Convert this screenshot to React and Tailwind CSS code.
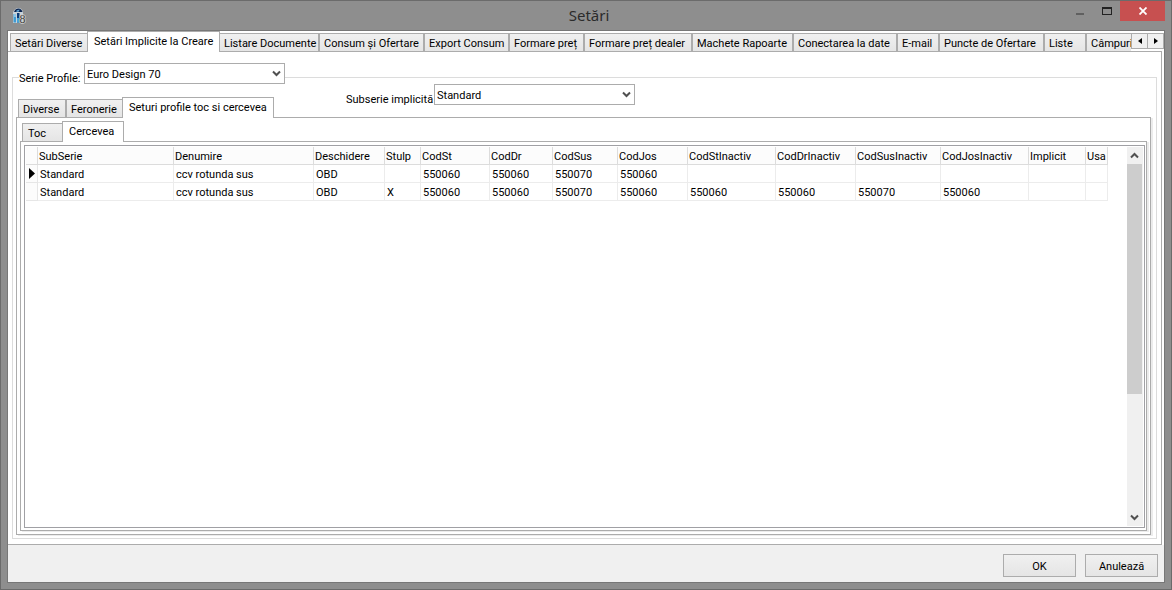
import React, { useState } from "react";

const mainTabs = [
  { label: "Setări Diverse", width: "w-[78px]" },
  { label: "Setări Implicite la Creare", width: "w-[133px]" },
  { label: "Listare Documente", width: "w-[100px]" },
  { label: "Consum și Ofertare", width: "w-[105px]" },
  { label: "Export Consum", width: "w-[85px]" },
  { label: "Formare preț", width: "w-[75px]" },
  { label: "Formare preț dealer", width: "w-[108px]" },
  { label: "Machete Rapoarte", width: "w-[101px]" },
  { label: "Conectarea la date", width: "w-[104px]" },
  { label: "E-mail", width: "w-[42px]" },
  { label: "Puncte de Ofertare", width: "w-[105px]" },
  { label: "Liste", width: "w-[42px]" },
  { label: "Câmpuri", width: "w-[60px]" },
];

const profileTabs = [
  { label: "Diverse", width: "w-[48px]" },
  { label: "Feronerie", width: "w-[57px]" },
  { label: "Seturi profile toc si cercevea", width: "w-[152px]" },
];

const setTabs = [
  { label: "Toc", width: "w-[41px]" },
  { label: "Cercevea", width: "w-[62px]" },
];

const columns = [
  { label: "SubSerie", width: "w-[136px]" },
  { label: "Denumire", width: "w-[140px]" },
  { label: "Deschidere", width: "w-[71px]" },
  { label: "Stulp", width: "w-[36px]" },
  { label: "CodSt", width: "w-[69px]" },
  { label: "CodDr", width: "w-[63px]" },
  { label: "CodSus", width: "w-[65px]" },
  { label: "CodJos", width: "w-[70px]" },
  { label: "CodStInactiv", width: "w-[88px]" },
  { label: "CodDrInactiv", width: "w-[80px]" },
  { label: "CodSusInactiv", width: "w-[85px]" },
  { label: "CodJosInactiv", width: "w-[88px]" },
  { label: "Implicit", width: "w-[57px]" },
  { label: "Usa", width: "w-[22px]" },
];

const rows = [
  ["Standard", "ccv rotunda sus", "OBD", "", "550060", "550060", "550070", "550060", "", "", "", "", "", ""],
  ["Standard", "ccv rotunda sus", "OBD", "X", "550060", "550060", "550070", "550060", "550060", "550060", "550070", "550060", "", ""],
];

function TabStrip({ tabs, initial, roomy }) {
  const [active, setActive] = useState(initial);
  const idlePad = roomy ? "pl-[5px]" : "pl-1";
  return (
    <div role="tablist" className="flex items-end">
      {tabs.map((tab, i) => (
        <button
          key={tab.label}
          type="button"
          role="tab"
          aria-selected={i === active}
          onClick={() => setActive(i)}
          className={
            i === active
              ? `relative z-10 -mx-px -mb-px h-[21px] shrink-0 border border-b-0 border-[#acacac] bg-white pb-px pl-1.5 text-left whitespace-nowrap ${tab.width}`
              : `h-[18px] shrink-0 border border-b-0 border-[#acacac] bg-linear-to-b from-[#f0f0f0] to-[#e5e5e5] pt-0.5 text-left whitespace-nowrap ${idlePad} ${tab.width}`
          }
        >
          {tab.label}
        </button>
      ))}
    </div>
  );
}

function Chevron({ up }) {
  return (
    <svg viewBox="0 0 9 7" className="h-[7px] w-[9px]" fill="none" stroke="#505050" strokeWidth="2">
      <path d={up ? "M1 5.5 4.5 2 8 5.5" : "M1 1.5 4.5 5 8 1.5"} />
    </svg>
  );
}

function Dropdown({ id, options }) {
  return (
    <span className="relative inline-flex">
      <select id={id} className="h-[21px] w-[201px] appearance-none border border-[#acacac] bg-white pt-0.5 pr-5 pl-0.5 outline-none">
        {options.map((o) => (
          <option key={o}>{o}</option>
        ))}
      </select>
      <span className="pointer-events-none absolute top-[7px] right-1">
        <Chevron />
      </span>
    </span>
  );
}

function AppIcon() {
  return (
    <svg viewBox="0 0 16 18" className="h-[18px] w-4">
      <path d="M0 4.500C1 1.500 3 0 5.500 0S9.500 1.500 10 4.500V15H0Z" fill="#c9d3da" />
      <path d="M1 4C2 1.500 3.500 .6 5.500 .6S8.800 1.800 9.500 4Z" fill="#0a2450" />
      <path d="M3.500 2.500 6.500 1.500 6 3.500 3.500 4Z" fill="#5fa9da" />
      <path d="M.5 6H3V14.500H.5Z" fill="#3f9bd3" />
      <path d="M1.500 6H2.500V9H1.500Z" fill="#d8f0fb" />
      <path d="M4 5H6.500V14.500H4Z" fill="#0b3a75" />
      <path d="M4 10H6.500V14.500H4Z" fill="#48a3d9" />
      <text x="6.500" y="14.500" fontSize="12" fontFamily="Liberation Serif, serif" fill="#444" stroke="#cfcfcf" strokeWidth="1.500" paintOrder="stroke">
        8
      </text>
    </svg>
  );
}

function TitleBar() {
  return (
    <header className="flex h-[29px] items-start">
      <div className="flex flex-1 pt-[7px] pl-3">
        <AppIcon />
      </div>
      <h1 className="pt-1 text-[15px] leading-5 text-[#2b2b2b]" style={{ fontFamily: '"Noto Sans", sans-serif' }}>
        Setări
      </h1>
      <div className="flex flex-1 justify-end pr-1.5">
        <button type="button" aria-label="Minimizează" className="flex h-5 w-[27px] items-center justify-center">
          <svg viewBox="0 0 8 20" className="h-5 w-2">
            <path d="M0 12H8V14H0Z" fill="#606060" />
          </svg>
        </button>
        <button type="button" aria-label="Maximizează" className="flex h-5 w-[27px] items-center justify-center">
          <svg viewBox="0 0 10 20" className="h-5 w-2.5">
            <path d="M0 6H10V14H0ZM1 8V13H9V8Z" fill="#222" fillRule="evenodd" />
          </svg>
        </button>
        <button type="button" aria-label="Închide" className="flex h-5 w-[45px] items-center justify-center bg-[#c75050]">
          <svg viewBox="0 0 8 8" className="h-2 w-2" stroke="#fff" strokeWidth="1.800">
            <path d="M.5 .5 7.500 7.500M7.500 .5 .5 7.500" />
          </svg>
        </button>
      </div>
    </header>
  );
}

function Grid() {
  return (
    <div className="flex flex-1 border border-[#a0a0a4] bg-white p-px">
      <div className="min-w-0 flex-1 overflow-hidden">
        <table className="w-[1082px] table-fixed border-separate border-spacing-0 text-left">
          <thead>
            <tr className="h-[18px] bg-[#fcfcfc]">
              <th aria-label="Rând curent" className="w-3 border-r border-b border-[#dcdcdc] p-0" />
              {columns.map((c) => (
                <th key={c.label} className={`h-[18px] border-r border-b border-[#dcdcdc] p-0 pt-0.5 pl-px font-normal whitespace-nowrap ${c.width}`}>
                  {c.label}
                </th>
              ))}
            </tr>
          </thead>
          <tbody>
            {rows.map((row, r) => (
              <tr key={r} className="h-[18px]">
                <td className="h-[18px] border-r border-b border-[#e6e6e6] bg-[#fcfcfc] p-0 pl-[3px]">
                  {r === 0 && (
                    <svg viewBox="0 0 6 11" className="h-[11px] w-1.5">
                      <path d="M0 0 6 5.500 0 11Z" fill="#000" />
                    </svg>
                  )}
                </td>
                {row.map((cell, i) => (
                  <td key={i} className="h-[18px] border-r border-b border-[#ececec] p-0 pt-0.5 pl-0.5 whitespace-nowrap">
                    {cell}
                  </td>
                ))}
              </tr>
            ))}
          </tbody>
        </table>
      </div>
      <div className="flex w-4 flex-col bg-[#f0f0f0]">
        <button type="button" aria-label="Sus" className="flex h-[17px] items-center justify-center pr-px">
          <Chevron up />
        </button>
        <div className="min-h-0 flex-1">
          <div className="mr-px h-[230px] bg-[#cdcdcd]" />
        </div>
        <button type="button" aria-label="Jos" className="flex h-[17px] items-center justify-center pr-px">
          <Chevron />
        </button>
      </div>
    </div>
  );
}

function ScrollTabButton({ label, path }) {
  return (
    <button type="button" aria-label={label} className="-ml-px flex h-4 w-[17px] items-center justify-center border border-[#acacac] bg-[#f0f0f0] first:ml-0">
      <svg viewBox="0 0 4 6" className="h-1.5 w-1">
        <path d={path} fill="#000" />
      </svg>
    </button>
  );
}

const pushButton = "h-[23px] w-[73px] border border-[#acacac] bg-linear-to-b from-[#f0f0f0] to-[#e5e5e5] pt-0.5 text-center";

export default function App() {
  return (
    <div className="flex min-h-screen flex-col border border-[#6b6b6b] bg-[#8e8e8e] font-['Roboto',sans-serif] text-[11px] leading-[15px] text-black">
      <TitleBar />
      <main className="mx-1.5 mb-1.5 flex flex-1 flex-col border border-[#777] bg-[#f0f0f0]">
        <div className="flex flex-1 flex-col bg-white pr-0.5">
          <div className="-mr-0.5 flex h-5 shrink-0 pl-0.5">
            <div className="flex h-[21px] min-w-0 flex-1 items-start overflow-hidden">
              <div className="flex h-5 items-end">
                <TabStrip tabs={mainTabs} initial={1} />
              </div>
            </div>
            <div className="flex shrink-0 pt-0.5">
              <ScrollTabButton label="Filele anterioare" path="M4 0V6L0 3Z" />
              <ScrollTabButton label="Filele următoare" path="M0 0V6L4 3Z" />
            </div>
          </div>
          <div className="flex flex-1 flex-col border-t border-r border-b border-[#acacac] pt-[11px] pr-1 pb-[5px] pl-1">
            <div role="group" aria-labelledby="serie-label" className="flex flex-1 flex-col">
              <div className="flex h-[21px] shrink-0">
                <div className="mt-3.5 w-[7px] border-t border-l border-[#dcdcdc]" />
                <label id="serie-label" htmlFor="serie" className="w-[65px] pt-2 whitespace-nowrap">
                  Serie Profile:
                </label>
                <Dropdown id="serie" options={["Euro Design 70"]} />
                <div className="mt-3.5 flex-1 border-t border-r border-[#dcdcdc]" />
              </div>
              <div className="flex flex-1 flex-col border-x border-b border-[#dcdcdc] pr-[5px] pb-[3px] pl-[3px]">
                <div className="flex h-[33px] shrink-0 items-end pl-0.5">
                  <TabStrip tabs={profileTabs} initial={2} />
                  <div className="ml-[73px] flex items-start self-start">
                    <label htmlFor="subserie" className="w-[88px] pt-2 whitespace-nowrap">
                      Subserie implicită
                    </label>
                    <Dropdown id="subserie" options={["Standard"]} />
                  </div>
                </div>
                <section className="flex flex-1 flex-col border border-[#acacac] p-[3px] shadow-[2px_1px_0_#ececec]">
                  <div className="flex h-5 shrink-0 items-end pl-0.5">
                    <TabStrip tabs={setTabs} initial={1} roomy />
                  </div>
                  <section className="flex flex-1 flex-col border border-[#acacac] pt-[3px] pr-px pb-0.5 pl-[3px] shadow-[2px_1px_0_#ececec]">
                    <Grid />
                  </section>
                </section>
              </div>
            </div>
          </div>
        </div>
        <footer className="flex h-[37px] shrink-0 justify-end gap-[9px] pt-[9px] pr-1.5">
          <button type="button" className={pushButton}>OK</button>
          <button type="button" className={pushButton}>Anulează</button>
        </footer>
      </main>
    </div>
  );
}
